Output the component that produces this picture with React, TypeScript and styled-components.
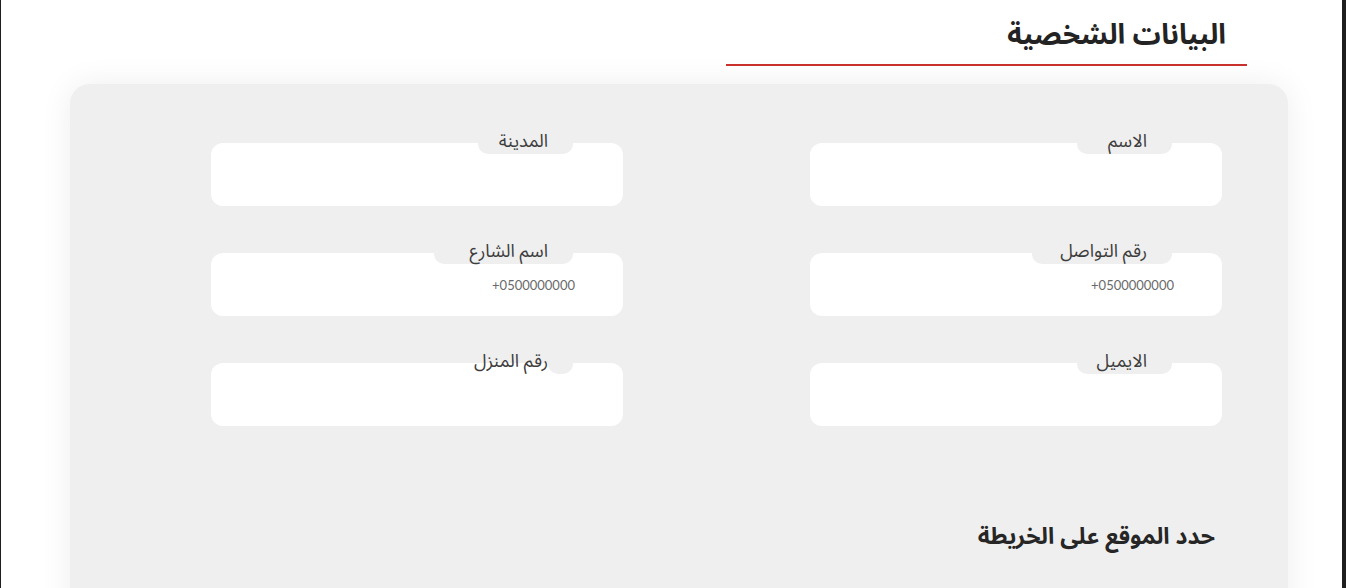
import React from 'react'
import styled, { createGlobalStyle } from 'styled-components'

const GlobalStyle = createGlobalStyle`
  html, body {
    margin: 0;
    padding: 0;
    background: #ffffff;
  }
  body {
    font-family: "Noto Sans Arabic", "Noto Sans", "DejaVu Sans", sans-serif;
  }
`

const Page = styled.div`
  direction: rtl;
  height: 588px;
  box-sizing: border-box;
  border-left: 1px solid #1f1f1f;
  border-right: 4px solid #1f1f1f;
  overflow: hidden;
`

const Header = styled.div`
  display: flex;
  justify-content: flex-start;
  padding-right: 95px;
`

const Title = styled.h1`
  width: 521px;
  box-sizing: border-box;
  margin: 0;
  padding: 16px 21px 8px 0;
  font-size: 28px;
  line-height: 40px;
  font-weight: 700;
  color: #232323;
  border-bottom: 2px solid #c9302c;
`

const Card = styled.div`
  margin: 18px 54px 0 69px;
  padding: 59px 66px 40px 0;
  min-height: 560px;
  background: #efefef;
  border-radius: 20px;
  box-shadow: 0 0 32px rgba(0, 0, 0, 0.07);
`

const FieldsGrid = styled.div`
  display: grid;
  grid-template-columns: 412px 412px;
  column-gap: 187px;
  row-gap: 47px;
`

const Field = styled.div`
  position: relative;
  height: 63px;
  background: #ffffff;
  border-radius: 12px;
`

const LabelTab = styled.label<{ $width: number }>`
  position: absolute;
  top: -13px;
  right: 50px;
  width: ${({ $width }) => $width}px;
  height: 24px;
  box-sizing: border-box;
  padding-right: 25px;
  background: #efefef;
  border-radius: 0 0 10px 10px;
  font-size: 18px;
  line-height: 22px;
  color: #3d3d3d;
  white-space: nowrap;
`

const Input = styled.input`
  width: 100%;
  height: 100%;
  box-sizing: border-box;
  border: none;
  outline: none;
  background: transparent;
  padding: 0 48px 0 16px;
  direction: ltr;
  text-align: right;
  font-family: "Lato", "Liberation Sans", sans-serif;
  font-size: 13px;
  color: #555;
  &::placeholder {
    color: #6a6a6a;
  }
`

const MapTitle = styled.h2`
  margin: 95px 7px 0 0;
  font-size: 23px;
  line-height: 32px;
  font-weight: 700;
  color: #262626;
`

const fields = [
  { label: 'الاسم', width: 95, placeholder: '' },
  { label: 'المدينة', width: 95, placeholder: '' },
  { label: 'رقم التواصل', width: 140, placeholder: '+0500000000' },
  { label: 'اسم الشارع', width: 139, placeholder: '+0500000000' },
  { label: 'الايميل', width: 95, placeholder: '' },
  { label: 'رقم المنزل', width: 24, placeholder: '' },
]

const App: React.FunctionComponent = () => {
  return (
    <>
      <GlobalStyle />
      <Page>
        <Header>
          <Title>البيانات الشخصية</Title>
        </Header>
        <Card>
          <FieldsGrid>
            {fields.map((f, i) => (
              <Field key={i}>
                <LabelTab $width={f.width}>{f.label}</LabelTab>
                <Input placeholder={f.placeholder} />
              </Field>
            ))}
          </FieldsGrid>
          <MapTitle>حدد الموقع على الخريطة</MapTitle>
        </Card>
      </Page>
    </>
  )
}

export default App
